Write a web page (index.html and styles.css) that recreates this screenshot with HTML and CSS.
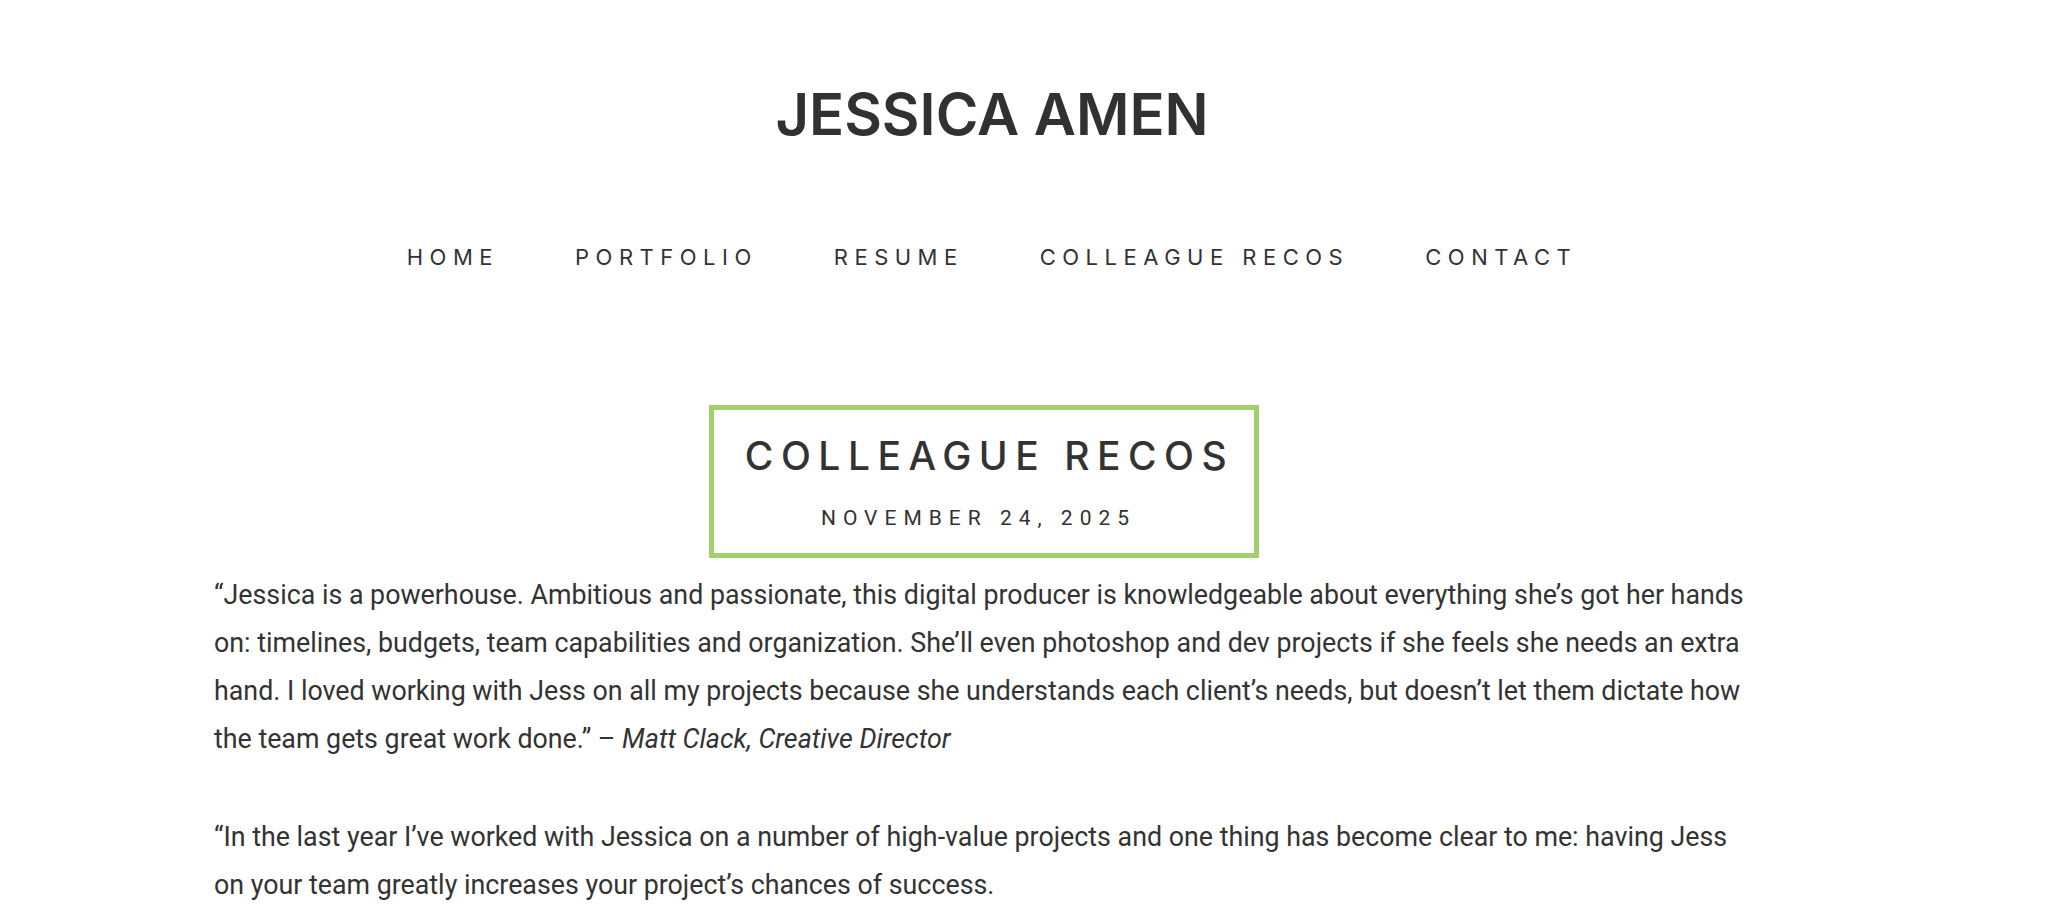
FILE: index.html
```html
<!DOCTYPE html>
<html lang="en">
<head>
  <meta charset="UTF-8" />
  <title>Colleague Recos – Jessica Amen</title>
  <meta name="viewport" content="width=device-width, initial-scale=1.0" />
  <link rel="stylesheet" href="styles.css">
</head>
<body>
  <header class="site-header">
    <h1 class="site-title"><a href="/">Jessica Amen</a></h1>
    <nav class="main-nav">
      <ul>
        <li><a href="/">Home</a></li>
        <li><a href="/portfolio">Portfolio</a></li>
        <li><a href="/resume">Resume</a></li>
        <li><a href="/colleague-recos">Colleague Recos</a></li>
        <li><a href="/contact">Contact</a></li>
      </ul>
    </nav>
  </header>

  <main class="content">
    <article class="entry">
      <header class="entry-header">
        <h2 class="entry-title">Colleague Recos</h2>
        <div class="entry-date">November 24, 2025</div>
      </header>

      <p>“Jessica is a powerhouse. Ambitious and passionate, this digital producer is knowledgeable about everything she’s got her hands on: timelines, budgets, team capabilities and organization. She’ll even photoshop and dev projects if she feels she needs an extra hand. I loved working with Jess on all my projects because she understands each client’s needs, but doesn’t let them dictate how the team gets great work done.” – <em>Matt Clack, Creative Director</em></p>

      <p>“In the last year I’ve worked with Jessica on a number of high-value projects and one thing has become clear to me: having Jess on your team greatly increases your project’s chances of success.</p>
    </article>
  </main>
</body>
</html>
```

FILE: styles.css
```css
body {
  margin: 0;
  background-color: #fff;
  color: #333;
  font-family: Roboto, Arial, sans-serif;
}

a {
  color: inherit;
  text-decoration: none;
}

/* header */
.site-header {
  width: 1984px;
  padding-top: 80px;
  text-align: center;
}

.site-title {
  margin: 0;
  font-family: Inter, Arial, sans-serif;
  font-size: 58px;
  font-weight: 600;
  line-height: 1.2;
  text-transform: uppercase;
  color: #313131;
}

.main-nav ul {
  display: flex;
  justify-content: center;
  margin: 92px 0 0;
  padding: 0;
  list-style: none;
}

.main-nav li {
  padding: 0 38px;
}

.main-nav a {
  font-family: Inter, Arial, sans-serif;
  font-size: 22px;
  line-height: 30px;
  letter-spacing: 6.5px;
  text-transform: uppercase;
  color: #333;
}

/* content */
.content {
  width: 1540px;
  margin-left: 214px;
  padding-top: 133px;
}

.entry-header {
  width: max-content;
  margin: 0 auto;
  padding: 23px 20px 20px 31px;
  border: 5px solid #a1cf6b;
  text-align: center;
}

.entry-title {
  margin: 0;
  font-family: Inter, Arial, sans-serif;
  font-size: 39px;
  font-weight: 500;
  line-height: 1.2;
  letter-spacing: 7.5px;
  text-transform: uppercase;
}

.entry-date {
  margin-top: 24px;
  padding-right: 22px;
  font-size: 21px;
  line-height: 30px;
  letter-spacing: 7px;
  text-transform: uppercase;
}

.entry p {
  margin: 13px 0 50px;
  font-size: 26.8px;
  line-height: 48px;
}

.entry p + p {
  margin-top: 0;
}
```
